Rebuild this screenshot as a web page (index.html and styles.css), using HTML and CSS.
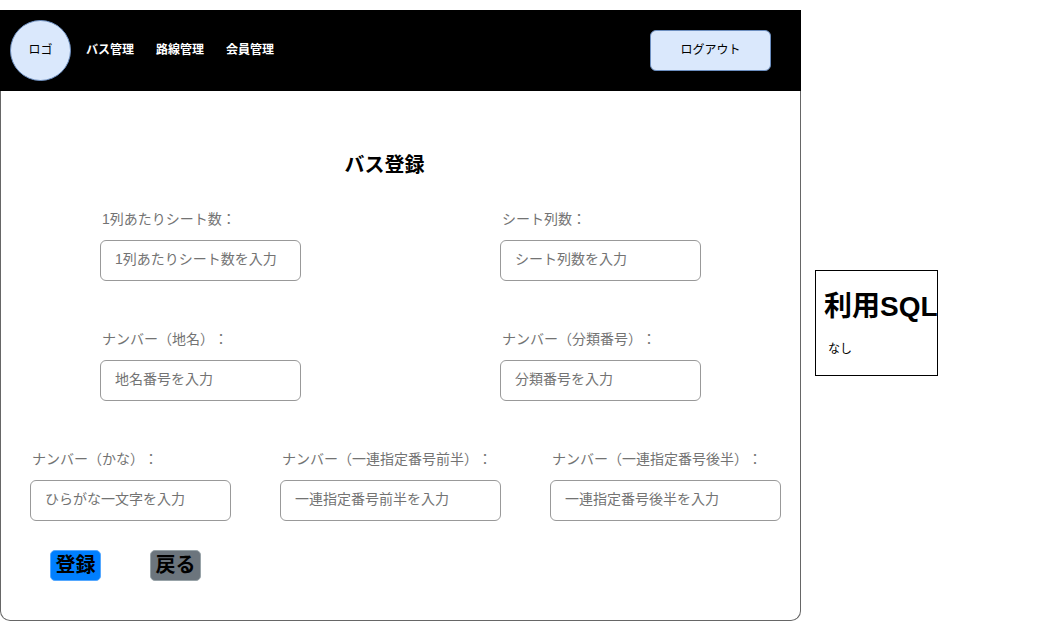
FILE: index.html
```html
<!DOCTYPE html>
<html lang="ja">
<head>
<meta charset="utf-8">
<meta name="viewport" content="width=device-width, initial-scale=1">
<title>バス登録</title>
<link rel="stylesheet" href="styles.css">
</head>
<body class="page">
  <div class="window">
    <header class="header">
      <a class="logo" href="#">ロゴ</a>
      <nav class="nav">
        <a class="nav-link" href="#">バス管理</a>
        <a class="nav-link" href="#">路線管理</a>
        <a class="nav-link" href="#">会員管理</a>
      </nav>
      <button class="logout" type="button">ログアウト</button>
    </header>
    <main class="content">
      <h1 class="title">バス登録</h1>
      <form class="form">
        <div class="row row-pair">
          <div class="field">
            <label class="label" for="seats">1列あたりシート数：</label>
            <input class="input" id="seats" type="text" placeholder="1列あたりシート数を入力">
          </div>
          <div class="field">
            <label class="label" for="rows">シート列数：</label>
            <input class="input" id="rows" type="text" placeholder="シート列数を入力">
          </div>
        </div>
        <div class="row row-pair">
          <div class="field">
            <label class="label" for="place">ナンバー（地名）：</label>
            <input class="input" id="place" type="text" placeholder="地名番号を入力">
          </div>
          <div class="field">
            <label class="label" for="class">ナンバー（分類番号）：</label>
            <input class="input" id="class" type="text" placeholder="分類番号を入力">
          </div>
        </div>
        <div class="row row-triple">
          <div class="field">
            <label class="label" for="kana">ナンバー（かな）：</label>
            <input class="input" id="kana" type="text" placeholder="ひらがな一文字を入力">
          </div>
          <div class="field field-medium">
            <label class="label" for="first">ナンバー（一連指定番号前半）：</label>
            <input class="input" id="first" type="text" placeholder="一連指定番号前半を入力">
          </div>
          <div class="field field-wide">
            <label class="label" for="second">ナンバー（一連指定番号後半）：</label>
            <input class="input" id="second" type="text" placeholder="一連指定番号後半を入力">
          </div>
        </div>
        <div class="actions">
          <button class="button button-primary" type="submit">登録</button>
          <button class="button button-secondary" type="button">戻る</button>
        </div>
      </form>
    </main>
  </div>
  <aside class="note">
    <h2 class="note-title">利用SQL</h2>
    <p class="note-text">なし</p>
  </aside>
</body>
</html>
```
FILE: styles.css
```css
*,
*::before,
*::after {
  box-sizing: border-box;
}

.page {
  display: flex;
  align-items: flex-start;
  gap: 14px;
  margin: 0;
  padding: 10px 103px 0 0;
  background: #fff;
  color: #000;
  font-family: "Liberation Sans", "Noto Sans CJK JP", sans-serif;
  font-size: 12px;
  line-height: 20px;
  text-spacing-trim: space-all;
}

.window {
  flex: 1;
  min-width: 0;
}

.header {
  display: flex;
  align-items: center;
  padding: 10px 30px 10px 10px;
  background: #000;
}

.logo {
  display: flex;
  align-items: center;
  justify-content: center;
  width: 61px;
  height: 61px;
  padding-bottom: 2px;
  border: 1px solid #6c8ebf;
  border-radius: 50%;
  background: #dae8fc;
  color: #000;
  text-decoration: none;
}

.nav {
  display: flex;
  gap: 22px;
  margin-left: 15px;
  padding-bottom: 2px;
}

.nav-link {
  color: #fff;
  font-weight: bold;
  text-decoration: none;
}

.logout {
  width: 121px;
  height: 41px;
  margin-left: auto;
  padding: 0 0 2px;
  border: 1px solid #6c8ebf;
  border-radius: 6px;
  background: #dae8fc;
  color: #000;
  font: inherit;
}

.content {
  padding: 59px 0 39px;
  border: 1px solid #666;
  border-top: 0;
  border-radius: 0 0 10px 10px;
}

.title {
  margin: 0;
  padding-right: 32px;
  font-size: 20px;
  line-height: 30px;
  text-align: center;
}

.form {
  display: flex;
  flex-direction: column;
  gap: 48px;
  padding-top: 29px;
}

.row {
  display: flex;
  justify-content: space-between;
}

.row-pair {
  padding: 0 99px;
}

.row-triple {
  padding: 0 19px 0 29px;
}

.field {
  display: flex;
  flex-direction: column;
  gap: 11px;
  width: 201px;
}

.field-medium {
  width: 221px;
}

.field-wide {
  width: 231px;
}

.label {
  padding-left: 2px;
  color: #737373;
  font-size: 14px;
  white-space: nowrap;
}

.input {
  width: 100%;
  height: 41px;
  padding: 0 14px 4px;
  border: 1px solid #999;
  border-radius: 6px;
  background: #fff;
  color: #000;
  font: inherit;
  font-size: 14px;
}

.input::placeholder {
  color: #737373;
  opacity: 1;
}

.actions {
  display: flex;
  gap: 49px;
  margin-top: -19px;
  padding-left: 49px;
}

.button {
  width: 51px;
  height: 31px;
  padding: 0 0 2px;
  border: 1px solid;
  border-radius: 5px;
  color: #000;
  font: inherit;
  font-size: 20px;
  font-weight: bold;
}

.button-primary {
  border-color: #55a8ff;
  background: #007fff;
}

.button-secondary {
  border-color: #98a3a8;
  background: #6c757d;
}

.note {
  flex: none;
  width: 123px;
  margin-top: 260px;
  padding: 16px 0 16px 8px;
  border: 1px solid #000;
}

.note-title {
  margin: 0;
  font-size: 28px;
  line-height: 40px;
  white-space: nowrap;
}

.note-text {
  margin: 12px 0 0;
  padding-left: 4px;
}
```
